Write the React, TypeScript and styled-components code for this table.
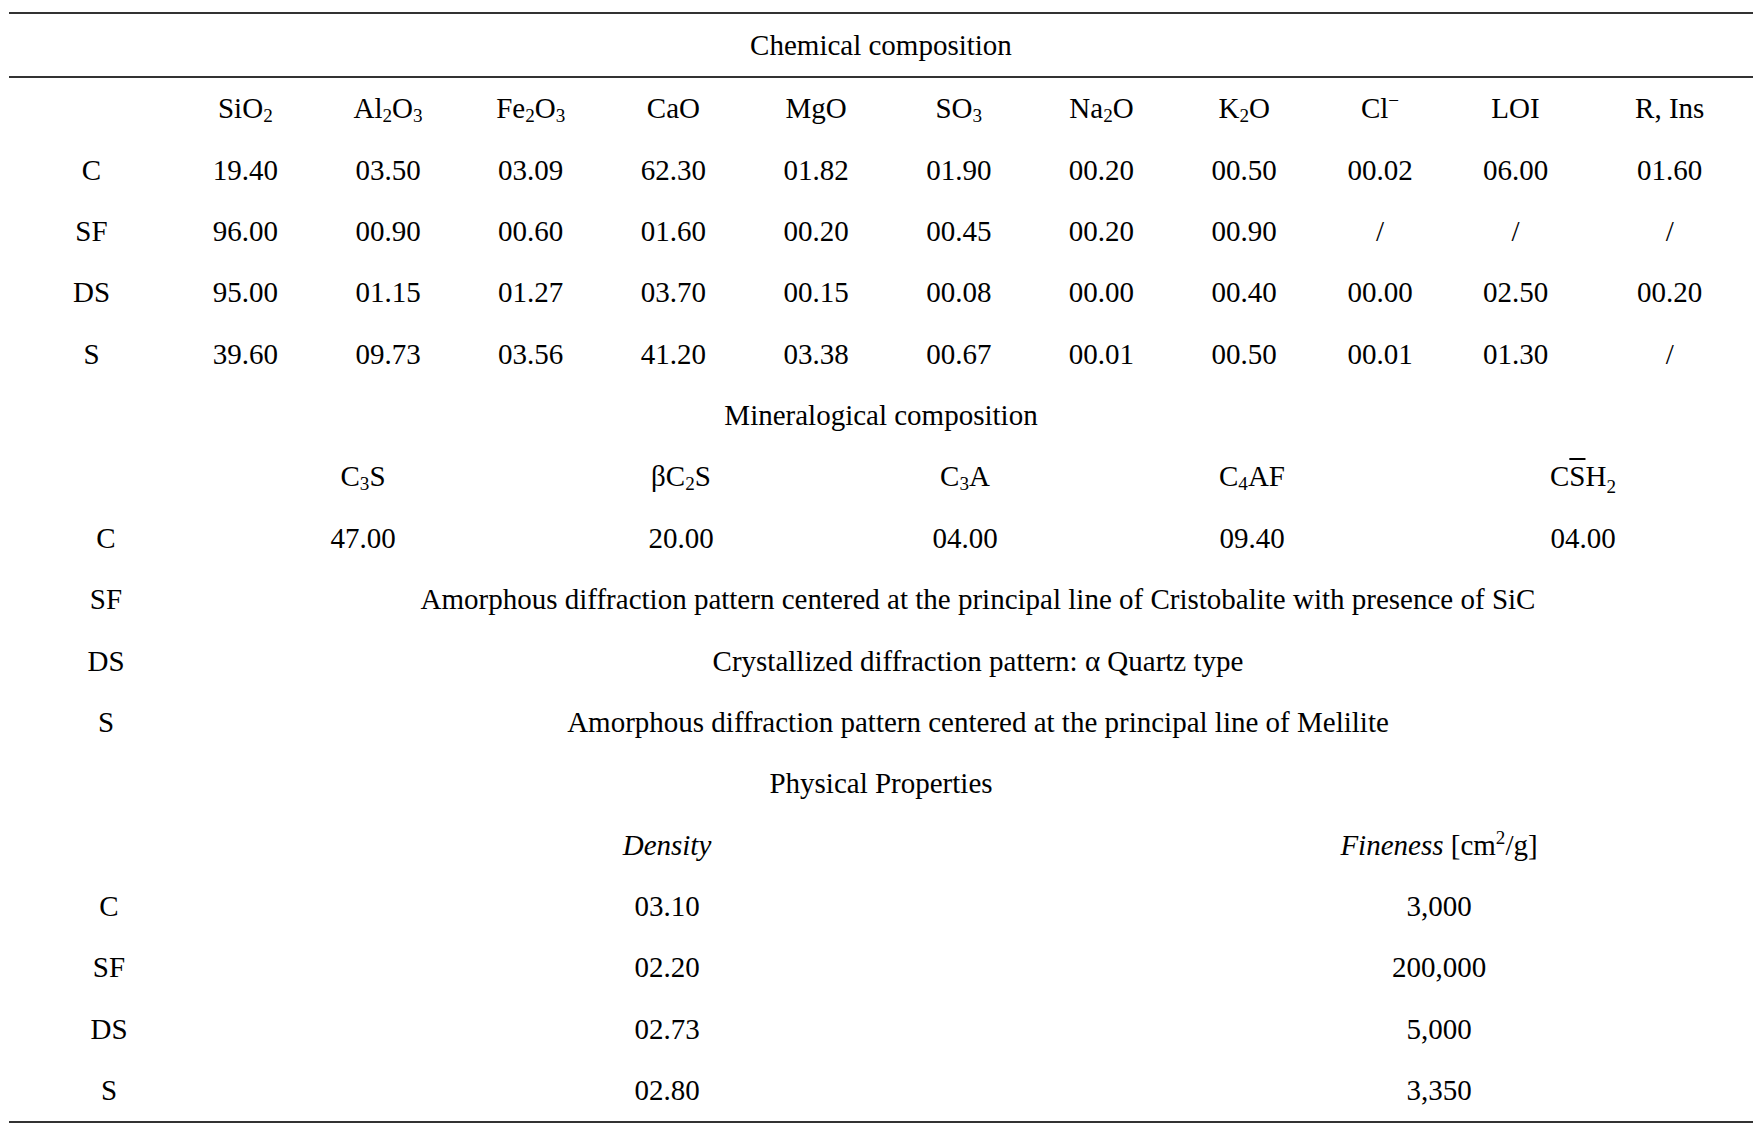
import React from 'react';
import styled, { createGlobalStyle } from 'styled-components';

const Global = createGlobalStyle`
  html, body { margin: 0; padding: 0; background: #ffffff; }
  body {
    font-family: "Liberation Serif", "Times New Roman", serif;
    color: #000000;
  }
`;

const Page = styled.div`
  padding: 12px 11px 0 9px;
  width: 1744px;
`;

const Table = styled.div`
  border-top: 2px solid #333333;
  border-bottom: 2px solid #333333;
  font-size: 29px;
`;

const Title = styled.div<{ $rule?: boolean }>`
  height: ${(p) => (p.$rule ? '62px' : '61.38px')};
  display: flex;
  align-items: center;
  justify-content: center;
  border-bottom: ${(p) => (p.$rule ? '2px solid #333333' : 'none')};
`;

const Row = styled.div<{ $cols: string }>`
  display: grid;
  grid-template-columns: ${(p) => p.$cols};
  height: 61.38px;
  align-items: center;
`;

const Cell = styled.div<{ $span?: number }>`
  grid-column: span ${(p) => p.$span ?? 1};
  text-align: center;
  white-space: nowrap;
`;

const Sub = styled.sub<{ $low?: boolean }>`
  font-size: 0.66em;
  line-height: 0;
  vertical-align: ${(p) => (p.$low ? '-0.38em' : '-0.2em')};
`;

const Sup = styled.sup`
  font-size: 0.66em;
  line-height: 0;
  vertical-align: 0.55em;
`;

const Bar = styled.span`
  text-decoration: overline;
  text-decoration-thickness: 2px;
`;

const Em = styled.em`
  font-style: italic;
`;

const CHEM_COLS = '165px repeat(8, 142.7px) 129px 142px 166.4px';
const MIN_COLS = '194px 320px 316px 252px 322px 340px';
const PHYS_COLS = '200px 916px 628px';

const chemHeaders: React.ReactNode[] = [
  <>SiO<Sub>2</Sub></>,
  <>Al<Sub>2</Sub>O<Sub>3</Sub></>,
  <>Fe<Sub>2</Sub>O<Sub>3</Sub></>,
  <>CaO</>,
  <>MgO</>,
  <>SO<Sub>3</Sub></>,
  <>Na<Sub>2</Sub>O</>,
  <>K<Sub>2</Sub>O</>,
  <>Cl<Sup>−</Sup></>,
  <>LOI</>,
  <>R, Ins</>,
];

const chemRows: [string, string[]][] = [
  ['C', ['19.40', '03.50', '03.09', '62.30', '01.82', '01.90', '00.20', '00.50', '00.02', '06.00', '01.60']],
  ['SF', ['96.00', '00.90', '00.60', '01.60', '00.20', '00.45', '00.20', '00.90', '/', '/', '/']],
  ['DS', ['95.00', '01.15', '01.27', '03.70', '00.15', '00.08', '00.00', '00.40', '00.00', '02.50', '00.20']],
  ['S', ['39.60', '09.73', '03.56', '41.20', '03.38', '00.67', '00.01', '00.50', '00.01', '01.30', '/']],
];

const minHeaders: React.ReactNode[] = [
  <>C<Sub>3</Sub>S</>,
  <>βC<Sub>2</Sub>S</>,
  <>C<Sub>3</Sub>A</>,
  <>C<Sub>4</Sub>AF</>,
  <>C<Bar>S</Bar>H<Sub $low>2</Sub></>,
];

const minTextRows: [string, string][] = [
  ['SF', 'Amorphous diffraction pattern centered at the principal line of Cristobalite with presence of SiC'],
  ['DS', 'Crystallized diffraction pattern: α Quartz type'],
  ['S', 'Amorphous diffraction pattern centered at the principal line of Melilite'],
];

const physRows: [string, string, string][] = [
  ['C', '03.10', '3,000'],
  ['SF', '02.20', '200,000'],
  ['DS', '02.73', '5,000'],
  ['S', '02.80', '3,350'],
];

export default function App() {
  return (
    <>
      <Global />
      <Page>
        <Table>
          <Title $rule>Chemical composition</Title>
          <Row $cols={CHEM_COLS}>
            <Cell />
            {chemHeaders.map((h, i) => (
              <Cell key={i}>{h}</Cell>
            ))}
          </Row>
          {chemRows.map(([label, vals]) => (
            <Row $cols={CHEM_COLS} key={label}>
              <Cell>{label}</Cell>
              {vals.map((v, i) => (
                <Cell key={i}>{v}</Cell>
              ))}
            </Row>
          ))}

          <Title>Mineralogical composition</Title>
          <Row $cols={MIN_COLS}>
            <Cell />
            {minHeaders.map((h, i) => (
              <Cell key={i}>{h}</Cell>
            ))}
          </Row>
          <Row $cols={MIN_COLS}>
            <Cell>C</Cell>
            {['47.00', '20.00', '04.00', '09.40', '04.00'].map((v, i) => (
              <Cell key={i}>{v}</Cell>
            ))}
          </Row>
          {minTextRows.map(([label, text]) => (
            <Row $cols={MIN_COLS} key={label}>
              <Cell>{label}</Cell>
              <Cell $span={5}>{text}</Cell>
            </Row>
          ))}

          <Title>Physical Properties</Title>
          <Row $cols={PHYS_COLS}>
            <Cell />
            <Cell><Em>Density</Em></Cell>
            <Cell><Em>Fineness</Em> [cm<Sup>2</Sup>/g]</Cell>
          </Row>
          {physRows.map(([label, d, f]) => (
            <Row $cols={PHYS_COLS} key={label}>
              <Cell>{label}</Cell>
              <Cell>{d}</Cell>
              <Cell>{f}</Cell>
            </Row>
          ))}
        </Table>
      </Page>
    </>
  );
}
